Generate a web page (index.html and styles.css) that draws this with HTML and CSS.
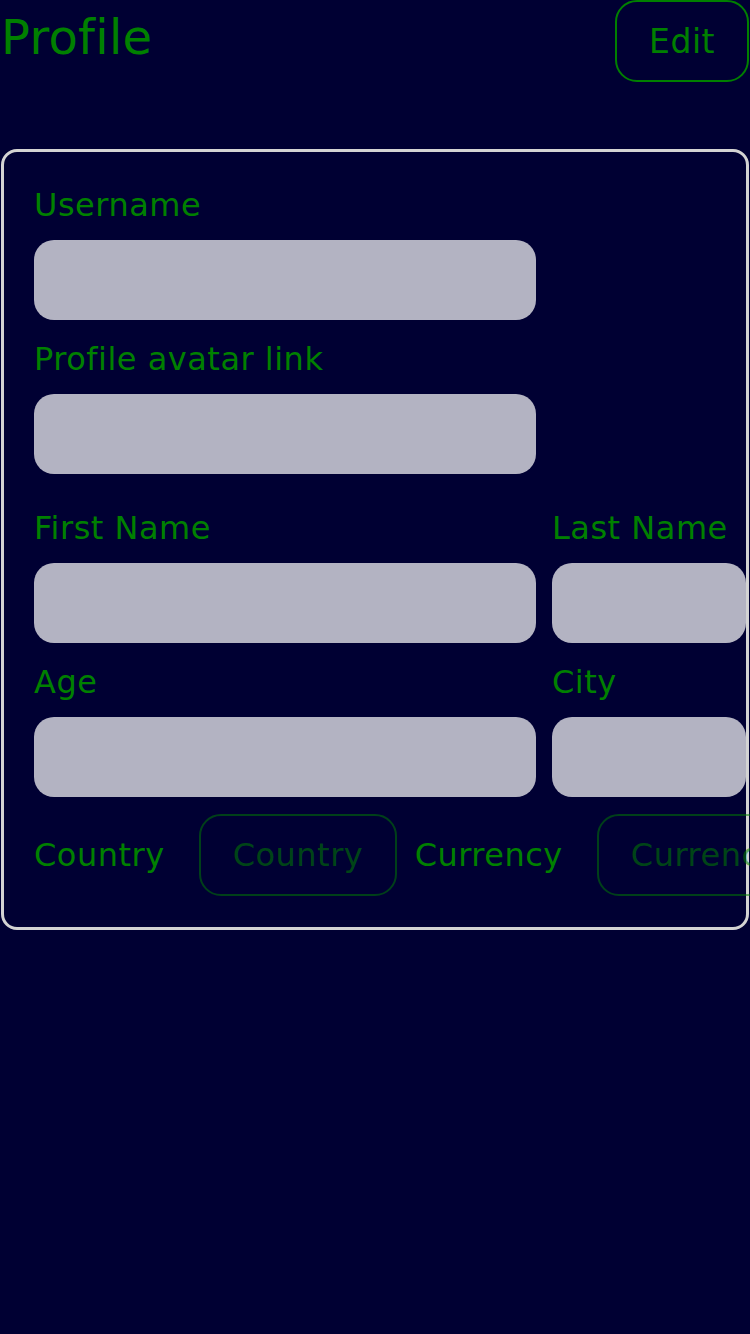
FILE: index.html
```html
<!DOCTYPE html>
<html lang="en">
<head>
<meta charset="utf-8">
<title>Profile</title>
<link rel="stylesheet" href="styles.css">
</head>
<body>
  <header class="header">
    <h1 class="title">Profile</h1>
    <button class="edit-btn" type="button">Edit</button>
  </header>

  <form class="card">
    <div class="field">
      <label class="label" for="username">Username</label>
      <input class="input" id="username" type="text">
    </div>
    <div class="field">
      <label class="label" for="avatar">Profile avatar link</label>
      <input class="input" id="avatar" type="text">
    </div>

    <div class="grid">
      <div class="field">
        <label class="label" for="first">First Name</label>
        <input class="input" id="first" type="text">
      </div>
      <div class="field">
        <label class="label" for="last">Last Name</label>
        <input class="input" id="last" type="text">
      </div>
      <div class="field last-row">
        <label class="label" for="age">Age</label>
        <input class="input" id="age" type="text">
      </div>
      <div class="field last-row">
        <label class="label" for="city">City</label>
        <input class="input" id="city" type="text">
      </div>
    </div>

    <div class="select-row">
      <label class="label inline" for="country">Country</label>
      <div class="picker"><span class="placeholder">Country</span></div>
      <label class="label inline" for="currency">Currency</label>
      <div class="picker"><span class="placeholder">Currency</span></div>
    </div>
  </form>
</body>
</html>
```

FILE: styles.css
```css
html, body {
  margin: 0;
  padding: 0;
  background: #000033;
  overflow-x: hidden;
}

body {
  font-family: "DejaVu Sans", "Noto Sans", sans-serif;
  font-variant-ligatures: none;
  color: #008000;
  min-height: 1334px;
}

.header {
  display: flex;
  justify-content: space-between;
  align-items: flex-start;
  margin: 0 1px 0 0;
  height: 82px;
}

.title {
  margin: 9px 0 0 1px;
  font-size: 48px;
  font-weight: normal;
  line-height: 56px;
  letter-spacing: 0.3px;
  color: #008000;
}

.edit-btn {
  box-sizing: border-box;
  height: 82px;
  padding: 0 32px;
  border: 2px solid #008000;
  border-radius: 22px;
  background: transparent;
  color: #008000;
  font-family: "DejaVu Sans", "Noto Sans", sans-serif;
  font-size: 33px;
  letter-spacing: 0.5px;
  line-height: 37px;
}

.card {
  display: block;
  margin: 67px 1px 0 1px;
  border: 3px solid #d3d3d3;
  border-radius: 16px;
  padding: 35px 0 31px 30px;
}

.field {
  display: flex;
  flex-direction: column;
  align-items: flex-start;
  margin-bottom: 21px;
}

.label {
  display: block;
  font-size: 32px;
  line-height: 37px;
  letter-spacing: 0.5px;
  color: #008000;
  margin-bottom: 16px;
}

.input {
  display: block;
  box-sizing: border-box;
  width: 502px;
  height: 80px;
  border: none;
  border-radius: 20px;
  background: rgba(255, 255, 255, 0.7);
  padding: 0 20px;
  font-family: inherit;
  font-size: 32px;
  outline: none;
}

.grid {
  display: grid;
  grid-template-columns: 502px 1fr;
  column-gap: 16px;
  margin-top: 36px;
}

.grid .field {
  align-items: stretch;
}

.grid .input {
  width: 100%;
}

.grid .field.last-row {
  margin-bottom: 17px;
}

.select-row {
  display: flex;
  flex-direction: row;
  align-items: center;
  flex-wrap: nowrap;
  height: 82px;
}

.label.inline {
  margin: 0 34px 0 0;
  flex: none;
}

.picker {
  box-sizing: border-box;
  flex: none;
  display: flex;
  align-items: center;
  width: 198px;
  height: 82px;
  margin-right: 18px;
  padding: 0 0 0 32px;
  border: 2px solid rgba(0, 128, 0, 0.5);
  border-radius: 22px;
  overflow: hidden;
  white-space: nowrap;
}

.placeholder {
  font-size: 32px;
  line-height: 37px;
  letter-spacing: 0.5px;
  color: rgba(0, 128, 0, 0.55);
}
```
